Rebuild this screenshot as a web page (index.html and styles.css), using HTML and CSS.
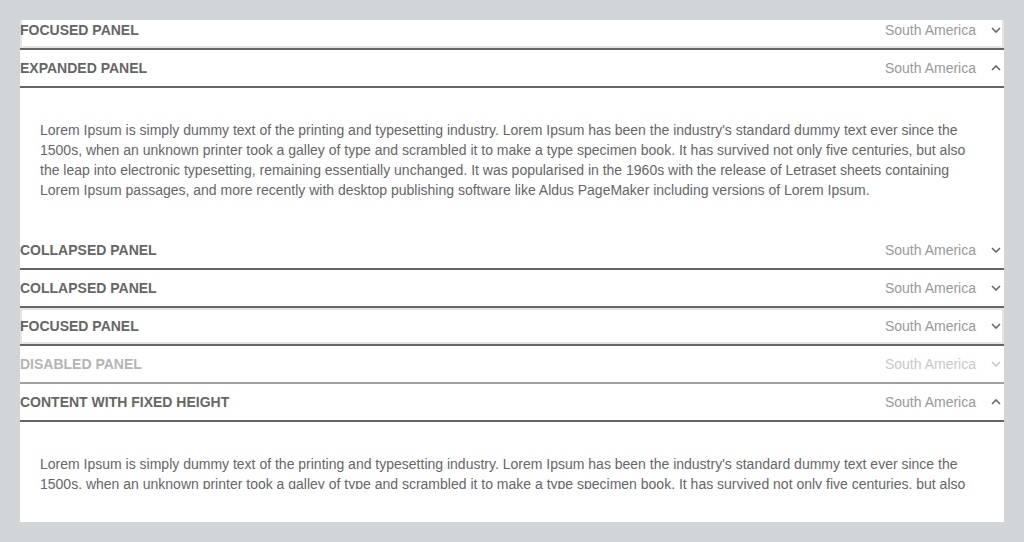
FILE: index.html
```html
<!DOCTYPE html>
<html>
<head>
<meta charset="utf-8">
<link rel="stylesheet" href="styles.css">
</head>
<body>
<div class="frame">
  <div class="accordion">
    <div class="header focused">
      <span class="title">FOCUSED PANEL</span>
      <span class="value">South America</span>
      <svg class="chev" viewBox="0 0 10 6" width="10" height="6"><path d="M1 1 L5 5 L9 1"/></svg>
    </div>
    <div class="header">
      <span class="title">EXPANDED PANEL</span>
      <span class="value">South America</span>
      <svg class="chev" viewBox="0 0 10 6" width="10" height="6"><path d="M1 5 L5 1 L9 5"/></svg>
    </div>
    <div class="body">
      <p>Lorem Ipsum is simply dummy text of the printing and typesetting industry. Lorem Ipsum has been the industry's standard dummy text ever since the 1500s, when an unknown printer took a galley of type and scrambled it to make a type specimen book. It has survived not only five centuries, but also the leap into electronic typesetting, remaining essentially unchanged. It was popularised in the 1960s with the release of Letraset sheets containing Lorem Ipsum passages, and more recently with desktop publishing software like Aldus PageMaker including versions of Lorem Ipsum.</p>
    </div>
    <div class="header">
      <span class="title">COLLAPSED PANEL</span>
      <span class="value">South America</span>
      <svg class="chev" viewBox="0 0 10 6" width="10" height="6"><path d="M1 1 L5 5 L9 1"/></svg>
    </div>
    <div class="header">
      <span class="title">COLLAPSED PANEL</span>
      <span class="value">South America</span>
      <svg class="chev" viewBox="0 0 10 6" width="10" height="6"><path d="M1 1 L5 5 L9 1"/></svg>
    </div>
    <div class="header focused">
      <span class="title">FOCUSED PANEL</span>
      <span class="value">South America</span>
      <svg class="chev" viewBox="0 0 10 6" width="10" height="6"><path d="M1 1 L5 5 L9 1"/></svg>
    </div>
    <div class="header disabled">
      <span class="title">DISABLED PANEL</span>
      <span class="value">South America</span>
      <svg class="chev" viewBox="0 0 10 6" width="10" height="6"><path d="M1 1 L5 5 L9 1"/></svg>
    </div>
    <div class="header">
      <span class="title">CONTENT WITH FIXED HEIGHT</span>
      <span class="value">South America</span>
      <svg class="chev" viewBox="0 0 10 6" width="10" height="6"><path d="M1 5 L5 1 L9 5"/></svg>
    </div>
    <div class="body fixed">
      <div class="clip">
        <p>Lorem Ipsum is simply dummy text of the printing and typesetting industry. Lorem Ipsum has been the industry's standard dummy text ever since the 1500s, when an unknown printer took a galley of type and scrambled it to make a type specimen book. It has survived not only five centuries, but also the leap into electronic typesetting, remaining essentially unchanged. It was popularised in the 1960s with the release of Letraset sheets containing Lorem Ipsum passages, and more recently with desktop publishing software like Aldus PageMaker including versions of Lorem Ipsum.</p>
      </div>
    </div>
  </div>
</div>
</body>
</html>
```
FILE: styles.css
```css
html, body {
  margin: 0;
  padding: 0;
}
body {
  background: #d1d5d8;
  font-family: "Liberation Sans", Arial, sans-serif;
  font-size: 14px;
  padding: 20px;
  height: 542px;
  box-sizing: border-box;
}
.frame {
  background: #fff;
  height: 502px;
  overflow: hidden;
}
.accordion {
  margin-top: -8px;
}
.header {
  display: flex;
  align-items: center;
  height: 36px;
  border-bottom: 2px solid #666;
  color: #666;
}
.header.focused {
  box-shadow: inset 0 0 0 2px #e4e4e4;
}
.title {
  font-weight: bold;
  flex: 1;
}
.value {
  color: #999;
}
.chev {
  margin-left: 15px;
  margin-right: 3px;
  fill: none;
  stroke: #666;
  stroke-width: 1.6;
}
.header.disabled {
  color: #b4b4b4;
  border-bottom-color: #a0a0a0;
}
.header.disabled .value {
  color: #c8c8c8;
}
.header.disabled .chev {
  stroke: #c8c8c8;
}
.body {
  padding: 32px 20px;
  color: #666;
  line-height: 20px;
}
.body p {
  margin: 0;
}
.clip {
  height: 35px;
  overflow: hidden;
}
```
